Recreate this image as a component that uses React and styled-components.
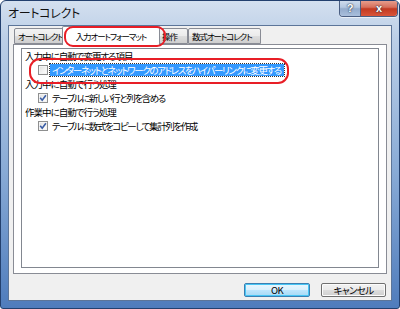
import React from "react";
import styled, { createGlobalStyle } from "styled-components";

const GlobalStyle = createGlobalStyle`
  html, body {
    margin: 0;
    padding: 0;
    background: #ffffff;
  }
  body {
    font-family: "Noto Sans CJK JP", "Liberation Sans", sans-serif;
    font-feature-settings: "palt" 1;
  }
`;

const uiText = `
  font-size: 9.5px;
  letter-spacing: -1px;
  white-space: nowrap;
  color: #000;
`;

const Window = styled.div`
  position: relative;
  box-sizing: border-box;
  width: 400px;
  height: 309px;
  padding: 0 7px 7px 7px;
  display: flex;
  flex-direction: column;
  border: 1px solid #23406e;
  border-radius: 6px 6px 3px 3px;
  background: linear-gradient(180deg, #d4e0ef 0%, #bccfe7 12%, #89abd6 55%, #4f7cbc 100%);
  overflow: hidden;
`;

const TitleBar = styled.div`
  height: 25px;
  display: flex;
  align-items: flex-start;
`;

const Title = styled.div`
  flex: 1;
  padding: 5px 0 0 0;
  font-size: 12px;
  line-height: 14px;
  color: #111;
  letter-spacing: -0.3px;
`;

const CaptionButtons = styled.div`
  display: flex;
  margin-top: -1px;
  margin-right: -6px;
  border: 1px solid #4a5e82;
  border-top: none;
  border-radius: 0 0 4px 4px;
  overflow: hidden;
  box-shadow: 0 1px 0 rgba(255, 255, 255, 0.6);
`;

const CaptionButton = styled.div`
  height: 16px;
  width: ${p => p.$w}px;
  display: flex;
  align-items: center;
  justify-content: center;
  font-family: "Liberation Sans", sans-serif;
  font-weight: bold;
  font-size: ${p => p.$size}px;
  color: #fff;
  text-shadow: 0 0 2px #28344a, 0 0 1px #28344a;
  background: ${p =>
    p.$close
      ? "linear-gradient(180deg, #e8a493 0%, #d7705c 45%, #c23a22 55%, #d9553a 100%)"
      : "linear-gradient(180deg, #d2deed 0%, #b4c7e0 45%, #93abcc 55%, #a9bfdc 100%)"};
  & + & {
    border-left: 1px solid #4a5e82;
  }
`;

const Client = styled.div`
  flex: 1;
  background: #f0f0f0;
  border: 1px solid #5c7599;
  padding: 2px 4px 3px 4px;
  display: flex;
  flex-direction: column;
`;

const TabStrip = styled.div`
  display: flex;
  align-items: flex-end;
  height: 17px;
  padding-left: 1px;
  position: relative;
  z-index: 1;
`;

const Tab = styled.div`
  ${uiText}
  font-size: 8.5px;
  letter-spacing: -1.1px;
  box-sizing: border-box;
  width: ${p => p.$w}px;
  height: ${p => (p.$active ? 19 : 16)}px;
  margin: ${p => (p.$active ? "0 -2px 0 -2px" : "0 0 1px 0")};
  position: relative;
  z-index: ${p => (p.$active ? 2 : 1)};
  border: 1px solid #898c95;
  border-bottom: ${p => (p.$active ? "none" : "1px solid #898c95")};
  border-radius: 2px 2px 0 0;
  background: ${p =>
    p.$active ? "#ffffff" : "linear-gradient(180deg, #f3f3f3 0%, #ebebeb 50%, #dddddd 51%, #cfcfcf 100%)"};
  line-height: 14px;
  padding: ${p => (p.$active ? "2px 0 0 0" : "0 0 0 3px")};
  text-align: ${p => (p.$active ? "center" : "left")};
`;

const TabPanel = styled.div`
  height: 230px;
  box-sizing: border-box;
  margin-top: -1px;
  background: #ffffff;
  border: 1px solid #898c95;
  padding: 3px 7px 5px 7px;
  display: flex;
`;

const ListBox = styled.div`
  flex: 1;
  border: 1px solid #828790;
  background: #fff;
  display: flex;
  flex-direction: column;
`;

const Heading = styled.div`
  ${uiText}
  height: 14px;
  line-height: 14px;
  padding-left: 3px;
`;

const OptionRow = styled.div`
  height: 14px;
  display: flex;
  align-items: center;
  padding-left: 16px;
`;

const Box = styled.div`
  box-sizing: border-box;
  width: 10px;
  height: 10px;
  border: 1px solid #8e8f8f;
  background: linear-gradient(135deg, #dcdcdc 0%, #f4f4f4 60%, #ffffff 100%);
  box-shadow: inset 0 0 0 1px #f4f4f4;
  display: flex;
  align-items: center;
  justify-content: center;
  flex: none;
`;

const OptionLabel = styled.div`
  ${uiText}
  letter-spacing: -1.4px;
  margin-left: 2px;
  height: 12px;
  line-height: 12px;
  padding: 0 3px 0 2px;
  color: ${p => (p.$selected ? "#ffffff" : "#000")};
  background: ${p => (p.$selected ? "#3399ff" : "transparent")};
  outline: ${p => (p.$selected ? "1px dotted #333" : "none")};
`;

const ButtonRow = styled.div`
  display: flex;
  justify-content: flex-end;
  gap: 11px;
  padding: 9px 1px 0 0;
`;

const PushButton = styled.div`
  ${uiText}
  box-sizing: border-box;
  width: ${p => p.$w}px;
  height: 14px;
  border: 1px solid ${p => (p.$default ? "#3c7fb1" : "#707070")};
  border-radius: 2px;
  background: ${p =>
    p.$default
      ? "linear-gradient(180deg, #eaf6fd 0%, #d9f0fc 50%, #bee6fd 51%, #a7d9f5 100%)"
      : "linear-gradient(180deg, #f2f2f2 0%, #ebebeb 50%, #dddddd 51%, #cfcfcf 100%)"};
  box-shadow: inset 0 0 0 1px ${p => (p.$default ? "#48c6f5" : "#fcfcfc")};
  line-height: 12px;
  text-align: center;
  letter-spacing: -0.6px;
`;

const Annotation = styled.div`
  position: absolute;
  left: ${p => p.$x}px;
  top: ${p => p.$y}px;
  width: ${p => p.$w}px;
  height: ${p => p.$h}px;
  box-sizing: border-box;
  border: 2px solid #e81e26;
  border-radius: ${p => p.$r}px;
  pointer-events: none;
  z-index: 5;
`;

const Check = () => (
  <svg width="8" height="8" viewBox="0 0 8 8">
    <path d="M1.2 3.8 L3.2 6.2 L6.9 1.2" fill="none" stroke="#3b5ea6" strokeWidth="1.6" />
  </svg>
);

const CheckOption = ({ checked, selected, children }) => (
  <OptionRow>
    <Box>{checked && <Check />}</Box>
    <OptionLabel $selected={selected}>{children}</OptionLabel>
  </OptionRow>
);

export default function App() {
  return (
    <>
      <GlobalStyle />
      <Window>
        <TitleBar>
          <Title>オートコレクト</Title>
          <CaptionButtons>
            <CaptionButton $w={20} $size={11}>?</CaptionButton>
            <CaptionButton $w={36} $size={11} $close>x</CaptionButton>
          </CaptionButtons>
        </TitleBar>
        <Client>
          <TabStrip>
            <Tab $w={50}>オートコレクト</Tab>
            <Tab $w={98} $active>入力オートフォーマット</Tab>
            <Tab $w={30}>操作</Tab>
            <Tab $w={73}>数式オートコレクト</Tab>
          </TabStrip>
          <TabPanel>
            <ListBox>
              <Heading>入力中に自動で変更する項目</Heading>
              <CheckOption selected>インターネットとネットワークのアドレスをハイパーリンクに変更する</CheckOption>
              <Heading>入力中に自動で行う処理</Heading>
              <CheckOption checked>テーブルに新しい行と列を含める</CheckOption>
              <Heading>作業中に自動で行う処理</Heading>
              <CheckOption checked>テーブルに数式をコピーして集計列を作成</CheckOption>
            </ListBox>
          </TabPanel>
          <ButtonRow>
            <PushButton $w={66} $default>OK</PushButton>
            <PushButton $w={65}>キャンセル</PushButton>
          </ButtonRow>
        </Client>
        <Annotation $x={63} $y={25} $w={102} $h={21} $r={9} />
        <Annotation $x={28} $y={57} $w={260} $h={26} $r={11} />
      </Window>
    </>
  );
}
